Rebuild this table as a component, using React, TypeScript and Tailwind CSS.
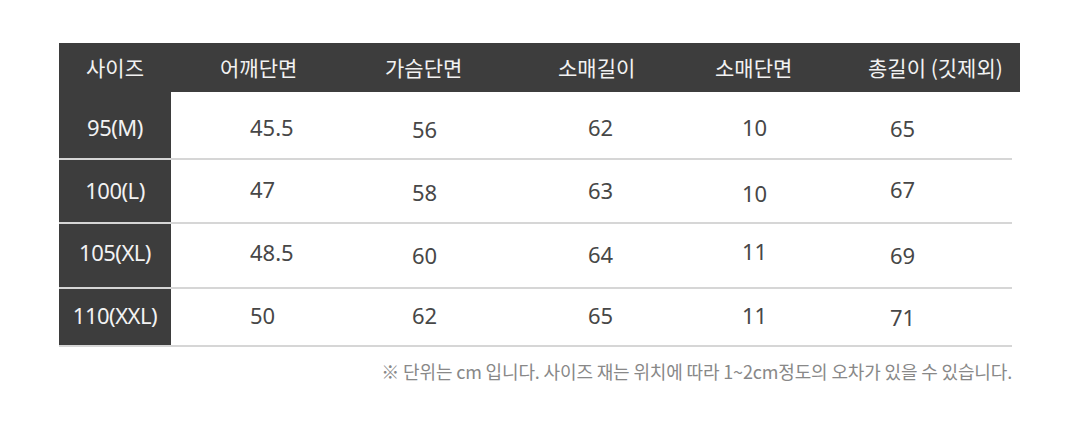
import React from "react";

type Row = { size: string; sizeCls: string; vals: [string, string][]; h: string };

const rows: Row[] = [
  {
    size: "95(M)",
    sizeCls: "mt-[4px]",
    h: "h-[66px]",
    vals: [
      ["45.5", "mt-[4px]"],
      ["56", "mt-[8px]"],
      ["62", "mt-[4px]"],
      ["10", "mt-[4px]"],
      ["65", "mt-[6px]"],
    ],
  },
  {
    size: "100(L)",
    sizeCls: "mb-[2px]",
    h: "h-[62px]",
    vals: [
      ["47", "mb-[4px]"],
      ["58", "mt-[2px]"],
      ["63", "mb-[2px]"],
      ["10", "mt-[4px]"],
      ["67", "mb-[4px]"],
    ],
  },
  {
    size: "105(XL)",
    sizeCls: "mb-[6px]",
    h: "h-[63px]",
    vals: [
      ["48.5", "mb-[6px]"],
      ["60", ""],
      ["64", "mb-[2px]"],
      ["11", "mb-[8px]"],
      ["69", ""],
    ],
  },
  {
    size: "110(XXL)",
    sizeCls: "mb-[4px]",
    h: "h-[56px]",
    vals: [
      ["50", "mb-[4px]"],
      ["62", "mb-[4px]"],
      ["65", "mb-[4px]"],
      ["11", "mb-[4px]"],
      ["71", ""],
    ],
  },
];

const dataWidths = ["w-[162px]", "w-[176px]", "w-[154px]", "w-[148px]", "flex-1"];
const headWidths = ["w-[165px]", "w-[173px]", "w-[157px]", "w-[153px]", "flex-1"];
const heads = ["어깨단면", "가슴단면", "소매길이", "소매단면", "총길이 (깃제외)"];

export default function App() {
  return (
    <div
      className="w-[1080px] h-[424px] bg-white overflow-hidden pl-[59px] pt-[43px]"
      style={{ fontFamily: '"Noto Sans", "Noto Sans CJK KR", sans-serif' }}
    >
      <div className="w-[961px]">
        <div className="flex h-[49px] bg-[#3d3d3d] text-[#f2f2f2] text-[21px] items-center">
          <div className="w-[112px] text-center" style={{ fontFamily: '"Noto Sans CJK KR", sans-serif' }}>
            사이즈
          </div>
          <div className="w-[49px]" />
          {heads.map((h, i) => (
            <div
              key={h}
              className={`${headWidths[i]} whitespace-nowrap`}
              style={{ fontFamily: '"Noto Sans CJK KR", sans-serif' }}
            >
              {h}
            </div>
          ))}
        </div>
        <div className="w-[953px]">
          {rows.map((r) => (
            <div key={r.size} className="flex border-b-2 border-[#d6d6d6]">
              <div
                className={`w-[112px] ${r.h} bg-[#3d3d3d] text-[#f2f2f2] text-[22px] flex items-center justify-center tracking-[-0.5px]`}
              >
                <span className={r.sizeCls}>{r.size}</span>
              </div>
              <div className="flex flex-1 items-center text-[#474747] text-[22px]">
                <div className="w-[79px]" />
                {r.vals.map(([v, cls], i) => (
                  <div key={i} className={`${dataWidths[i]} ${cls}`}>
                    {v}
                  </div>
                ))}
              </div>
            </div>
          ))}
        </div>
        <div
          className="w-[953px] text-right text-[18px] text-[#888888] mt-[11px] tracking-[-0.15px]"
          style={{ fontFamily: '"Noto Sans CJK KR", sans-serif' }}
        >
          ※ 단위는 cm 입니다. 사이즈 재는 위치에 따라 1~2cm정도의 오차가 있을 수 있습니다.
        </div>
      </div>
    </div>
  );
}
